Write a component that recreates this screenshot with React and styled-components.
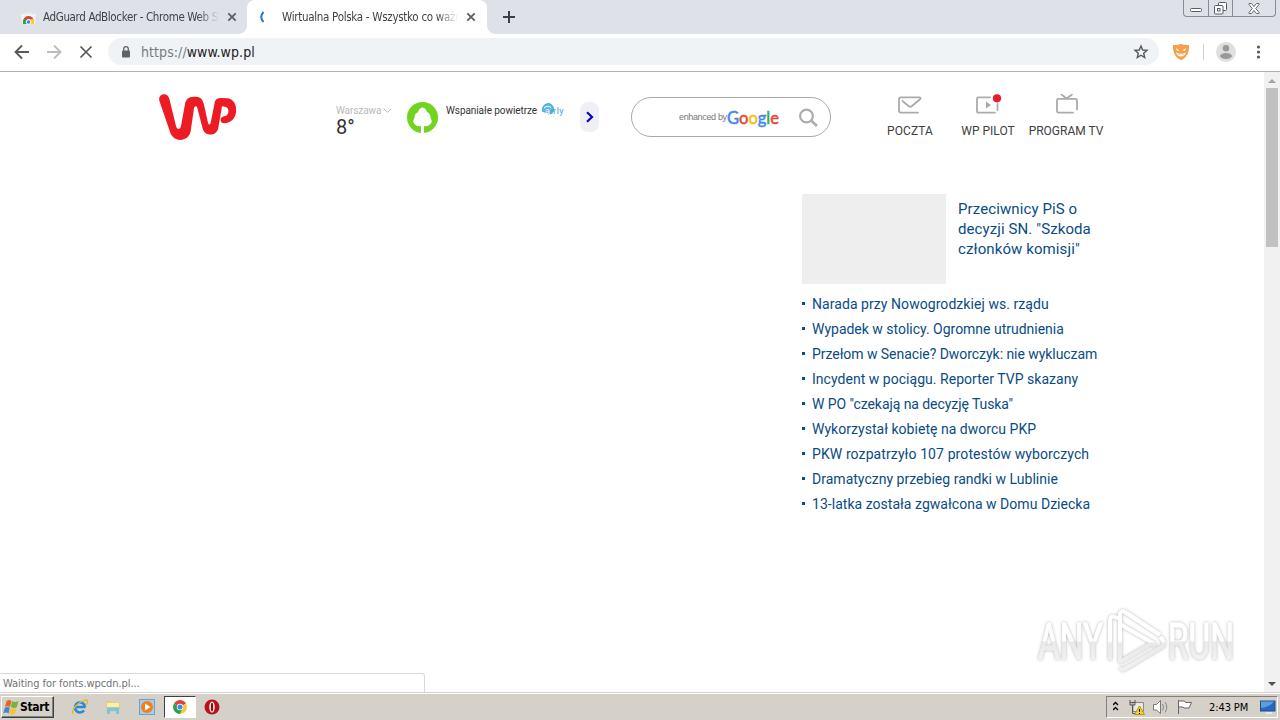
import React from "react";
import styled, { createGlobalStyle } from "styled-components";

const GlobalStyle = createGlobalStyle`
  * {
    box-sizing: border-box;
  }
  body {
    margin: 0;
    overflow: hidden;
    background: #fff;
  }
  svg {
    display: block;
    flex-shrink: 0;
  }
`;

const Screen = styled.div`
  position: relative;
  display: flex;
  flex-direction: column;
  width: 1280px;
  height: 720px;
  overflow: hidden;
  font-family: "DejaVu Sans Condensed", "DejaVu Sans", sans-serif;
  white-space: nowrap;
`;

const TabStrip = styled.div`
  display: flex;
  height: 34px;
  background: #dee1e8;
`;

const Tab = styled.div`
  position: relative;
  display: flex;
  align-items: center;
  width: ${props => (props.$active ? 240 : 247)}px;
  padding-left: ${props => (props.$active ? 8 : 21)}px;
  background: ${props => (props.$active ? "#fff" : "transparent")};
  border-radius: 8px 8px 0 0;

  &::before,
  &::after {
    content: ${props => (props.$active ? '""' : "none")};
    position: absolute;
    bottom: 0;
    width: 8px;
    height: 8px;
  }
  &::before {
    left: -8px;
    background: radial-gradient(circle at 0 0, transparent 7.5px, #fff 8px);
  }
  &::after {
    right: -8px;
    background: radial-gradient(circle at 100% 0, transparent 7.5px, #fff 8px);
  }
`;

const TabTitle = styled.div`
  width: 176px;
  margin: 0 8px 0 ${props => props.$gap}px;
  font-size: 11.5px;
  line-height: 20px;
  letter-spacing: ${props => props.$spacing}px;
  color: #3f4349;
  mask-image: linear-gradient(to right, #000 88%, transparent);
`;

const NewTab = styled.div`
  display: flex;
  align-items: center;
  padding-left: 15px;
`;

const WindowButtons = styled.div`
  display: flex;
  width: 93px;
  height: 17px;
  margin: 0 4px 0 auto;
  border: 1px solid #858b98;
  border-top: 0;
  border-radius: 0 0 4px 4px;
`;

const WindowButton = styled.div`
  display: flex;
  align-items: center;
  justify-content: center;
  width: ${props => props.$width}px;
  border-right: ${props => (props.$last ? 0 : 1)}px solid #858b98;
`;

const Toolbar = styled.div`
  display: flex;
  align-items: center;
  height: 38px;
  padding: 0 0 2px 14px;
  border-bottom: 1px solid #b2b2b2;
`;

const NavIcons = styled.div`
  display: flex;
  flex-shrink: 0;
  gap: 16px;
  width: 94px;
`;

const Omnibox = styled.div`
  display: flex;
  flex-shrink: 0;
  align-items: center;
  width: 1051px;
  height: 27px;
  padding: 0 10px 0 12px;
  border-radius: 14px;
  background: #f0f3f5;
`;

const Url = styled.div`
  margin: 0 auto 0 9px;
  font-size: 14px;
  line-height: 20px;
  letter-spacing: 0.07px;
  color: #1d2024;
`;

const Protocol = styled.span`
  color: #777b80;
`;

const Extensions = styled.div`
  display: flex;
  align-items: center;
  padding-left: 13px;
`;

const Divider = styled.div`
  width: 1px;
  height: 16px;
  margin: 0 12px 0 13px;
  background: #ccced1;
`;

const Viewport = styled.div`
  position: relative;
  display: flex;
  height: 620px;
`;

const Page = styled.div`
  width: 1264px;
  font-family: Roboto, sans-serif;
`;

const PageHeader = styled.div`
  display: flex;
  align-items: flex-start;
  height: 122px;
  padding: 22px 0 0 159px;
`;

const Weather = styled.div`
  width: 71px;
  margin-left: 100px;
  padding-top: 10px;
`;

const City = styled.div`
  display: flex;
  align-items: center;
  gap: 2px;
  font-size: 10px;
  line-height: 13px;
  letter-spacing: -0.1px;
  color: #b9b9b9;
`;

const Degrees = styled.div`
  font-size: 20px;
  line-height: 20px;
  color: #333;
`;

const Air = styled.div`
  display: flex;
  width: 173px;
  padding-top: 8px;
`;

const AirText = styled.div`
  margin: 2px 5px 0 8px;
  font-size: 10px;
  line-height: 14px;
  letter-spacing: -0.07px;
  color: #333;
`;

const NextButton = styled.div`
  display: flex;
  align-items: center;
  justify-content: center;
  width: 19px;
  height: 30px;
  margin-top: 8px;
  border-radius: 8px;
  background: #eef0f6;
`;

const Search = styled.div`
  display: flex;
  align-items: center;
  width: 200px;
  height: 40px;
  margin: 3px 0 0 32px;
  padding-left: 47px;
  border: 1px solid #aaa;
  border-radius: 20px;
`;

const Enhanced = styled.span`
  width: 48px;
  font-family: "Liberation Sans", Arial, sans-serif;
  font-size: 9px;
  letter-spacing: -0.35px;
  color: #777;
`;

const Services = styled.div`
  display: flex;
  margin-left: 40px;
`;

const Service = styled.div`
  display: flex;
  flex-direction: column;
  align-items: center;
  width: 78px;
  font-size: 12px;
  line-height: 16px;
  letter-spacing: ${props => props.$spacing || 0}px;
  color: #404040;
`;

const News = styled.div`
  width: 310px;
  margin-left: 802px;
`;

const Lead = styled.div`
  display: flex;
  gap: 12px;
  height: 97px;
`;

const Thumbnail = styled.div`
  width: 144px;
  height: 90px;
  background: #eee;
`;

const LeadTitle = styled.div`
  padding-top: 5px;
  font-size: 15px;
  line-height: 20px;
  letter-spacing: 0.1px;
  color: #0a4b84;
`;

const NewsItem = styled.div`
  display: flex;
  align-items: center;
  gap: 7px;
  height: 25px;
  font-size: 14px;
  letter-spacing: ${props => props.$spacing}px;
  color: #0a4b84;

  &::before {
    content: "";
    width: 3px;
    height: 3px;
    background: #0a4b84;
  }
`;

const Scrollbar = styled.div`
  display: flex;
  flex-direction: column;
  align-items: center;
  width: 16px;
  padding: 7px 0 6px;
  background: #f1f1f1;
`;

const Thumb = styled.div`
  width: 12px;
  height: 159px;
  margin: 5px 0 auto;
  background: #c1c1c1;
`;

const StatusBubble = styled.div`
  position: absolute;
  left: 0;
  bottom: 0;
  width: 425px;
  height: 19px;
  padding-left: 3px;
  border: 1px solid #d9d9d9;
  border-left: 0;
  border-bottom: 0;
  border-radius: 0 3px 0 0;
  background: #fff;
  font-size: 11px;
  line-height: 19px;
  letter-spacing: -0.08px;
  color: #737373;
`;

const Watermark = styled.div`
  position: absolute;
  left: 1030px;
  top: 532px;
`;

const Taskbar = styled.div`
  display: flex;
  align-items: center;
  height: 28px;
  padding: 1px 0 0 1px;
  border-top: 1px solid #d5d0c8;
  background: #d5d0c8;
  box-shadow: inset 0 1px #fff;
`;

const StartButton = styled.div`
  display: flex;
  align-items: center;
  gap: 1px;
  width: 53px;
  height: 22px;
  padding-left: 1px;
  border: 1px solid;
  border-color: #fff #404040 #404040 #fff;
  box-shadow: inset -1px -1px #808080;
  font-size: 12px;
  font-weight: bold;
  letter-spacing: -0.35px;
  color: #000;
`;

const TaskButton = styled.div`
  display: flex;
  align-items: center;
  justify-content: center;
  width: ${props => (props.$active ? 32 : 33.5)}px;
  height: 22px;
  border: ${props => (props.$active ? "1px solid" : "0")};
  border-color: #404040 #fff #fff #404040;
  background: ${props => (props.$active ? "#fff" : "transparent")};
`;

const QuickLaunch = styled.div`
  display: flex;
  padding-left: 9px;
`;

const Tray = styled.div`
  display: flex;
  align-items: center;
  width: 172px;
  height: 22px;
  margin: 0 2px 0 auto;
  padding-left: 6px;
  border: 1px solid;
  border-color: #808080 #fff #fff #808080;
`;

const Clock = styled.div`
  width: 50px;
  margin: 0 1px 0 16px;
  font-size: 11px;
  letter-spacing: -0.1px;
  color: #000;
`;

const Close = () => (
  <svg width="10" height="10" viewBox="0 0 10 10">
    <path d="M1.3 1.3l7.4 7.4M8.7 1.3L1.3 8.7" stroke="#5b5e63" strokeWidth="1.8" />
  </svg>
);

const WpLogo = () => (
  <svg width="77" height="46" viewBox="0 0 231 138">
    <path
      d="M1 20C-4 0 25-8 31 14L51 96C54 108 64 108 66 96L78 30C82 10 94 8 109 8C126 8 131 16 135 32L147 86C149 93 153 93 155 86L167 26C170 14 177 12 187 12L205 13C243 17 241 87 196 88C181 88 181 68 196 67C212 65 212 39 198 38L189 37L178 101C173 128 138 128 131 104L115 42C113 35 107 35 105 43L95 112C88 146 42 146 33 113Z"
      fill="#ed1c24"
    />
  </svg>
);

const Google = () => (
  <svg width="54" height="24" viewBox="0 0 54 24">
    <text
      x="0"
      y="18.5"
      fontFamily="Lato, sans-serif"
      fontSize="17.5"
      fontWeight="400"
      strokeWidth="0.5"
      textLength="52"
      lengthAdjust="spacingAndGlyphs"
    >
      <tspan fill="#4285f4" stroke="#4285f4">G</tspan>
      <tspan fill="#ea4335" stroke="#ea4335">o</tspan>
      <tspan fill="#fbbc05" stroke="#fbbc05">o</tspan>
      <tspan fill="#4285f4" stroke="#4285f4">g</tspan>
      <tspan fill="#34a853" stroke="#34a853">l</tspan>
      <tspan fill="#ea4335" stroke="#ea4335">e</tspan>
    </text>
  </svg>
);

const AnyRun = () => (
  <svg width="230" height="80" viewBox="0 0 230 80" overflow="visible">
    <defs>
      <linearGradient id="fade" x1="0" y1="0" x2="0" y2="76" gradientUnits="userSpaceOnUse">
        <stop offset="0.49" stopColor="#fff" />
        <stop offset="0.52" stopColor="#e9e9e9" />
        <stop offset="1" stopColor="#f4f4f4" />
      </linearGradient>
      <linearGradient id="fadeText" x1="0" y1="-35" x2="0" y2="0" gradientUnits="userSpaceOnUse">
        <stop offset="0.49" stopColor="#fff" />
        <stop offset="0.53" stopColor="#e9e9e9" />
        <stop offset="1" stopColor="#f2f2f2" />
      </linearGradient>
      <filter id="glow" x="-10%" y="-10%" width="120%" height="120%">
        <feDropShadow dx="0" dy="0" stdDeviation="1.8" floodColor="#777" floodOpacity="0.6" />
      </filter>
    </defs>
    <g filter="url(#glow)" fill="url(#fadeText)" fontFamily="Roboto, sans-serif" fontSize="49">
      <text transform="translate(8 54.500) scale(.68 1)" stroke="url(#fadeText)">ANY</text>
      <text transform="translate(138 54.500) scale(.68 1)" stroke="url(#fadeText)">RUN</text>
      <g fill="none" stroke="url(#fade)" strokeWidth="4" strokeLinejoin="round">
        <path d="M90 15V59M90 15L84 12.500Q80 12 80 17V56" />
        <path d="M90 15V10Q91 6 95 8L130 31M90 20L126 41M90 58L124 38M91 63Q91 67 96 64L133 42Q135 37 130 33" />
      </g>
    </g>
  </svg>
);

const ServiceIcon = ({ type }) => (
  <svg width="30" height="29" viewBox="0 0 30 29" fill="none" stroke="#ababab" strokeWidth="1.8" strokeLinecap="round">
    {type === "mail" && (
      <path d="M23 18.700H6Q4 18.700 4 16.700V5Q4 3.300 6 3.300H24.500Q26.500 3.600 25 5.300L17 12Q15.300 13.500 13.500 12L7.500 7" />
    )}
    {type === "pilot" && (
      <g>
        <path d="M17 3.300H5.500Q4 3.300 4 5V17Q4 18.700 5.500 18.700H22M24.500 10V16" />
        <path d="M13 7.500v7l5-3.500z" fill="#a8a8a8" stroke="none" />
        <circle cx="24" cy="4.300" r="4.100" fill="#ed1c24" stroke="none" />
      </g>
    )}
    {type === "tv" && (
      <path d="M22 18.700H7.500Q6 18.700 6 17V6.500Q6 4.800 7.500 4.800H24.500Q26 4.800 26 6.500V15.500M10.500 .5L15.500 4.500L21 .5" />
    )}
  </svg>
);

const Chrome = () => (
  <svg width="14" height="14" viewBox="0 0 14 14">
    <path d="M7 7L1 3.500A7 7 0 0 1 13 3.500z" fill="#e34133" />
    <path d="M7 7L1 3.500A7 7 0 0 0 7 14L10 8.500z" fill="#2ba24c" />
    <path d="M7 7L13 3.500A7 7 0 0 1 7 14L10 8.500z" fill="#fcc934" />
    <circle cx="7" cy="7" r="3.200" fill="#fff" />
    <circle cx="7" cy="7" r="2.500" fill="#4285f4" />
  </svg>
);

const WindowsFlag = () => (
  <svg width="16" height="16" viewBox="0 0 16 16">
    <path d="M3.500 2Q6 0 8.500 2L7 8Q4.500 6.500 2 8z" fill="#e6642c" />
    <path d="M9.300 2Q12 4 15.500 2L13.800 8Q11 10 7.900 8z" fill="#73b537" />
    <path d="M1.700 9Q4.500 7 6.800 9L5.500 14.500Q3 12.500.3 14.500z" fill="#3b87d3" />
    <path d="M7.600 9Q10.500 11 13.500 9L12 14.500Q9.500 16.500 6.300 14.500z" fill="#f6c52e" />
  </svg>
);

const news = [
  { title: "Narada przy Nowogrodzkiej ws. rządu", spacing: 0.06 },
  { title: "Wypadek w stolicy. Ogromne utrudnienia", spacing: -0.01 },
  { title: "Przełom w Senacie? Dworczyk: nie wykluczam", spacing: -0.05 },
  { title: "Incydent w pociągu. Reporter TVP skazany", spacing: 0.03 },
  { title: "W PO \"czekają na decyzję Tuska\"", spacing: -0.07 },
  { title: "Wykorzystał kobietę na dworcu PKP", spacing: 0.03 },
  { title: "PKW rozpatrzyło 107 protestów wyborczych", spacing: 0.1 },
  { title: "Dramatyczny przebieg randki w Lublinie", spacing: 0.02 },
  { title: "13-latka została zgwałcona w Domu Dziecka", spacing: 0.03 }
];

const BrowserTabs = () => (
  <TabStrip>
    <Tab>
      <svg width="15" height="15" viewBox="0 0 15 15">
        <path d="M0 4h15l-1 10H1z" fill="#f3f3f3" />
        <path d="M4 2h7v2H4z" fill="#e9e9e9" />
        <path d="M2 12a5.500 5.500 0 0 1 11-1L7.500 9z" fill="#dc4437" />
        <path d="M2 14V11L4 8l4 6z" fill="#2ba24c" />
        <path d="M8 14l2-5h3v5z" fill="#fcc934" />
        <circle cx="7.500" cy="12" r="2.300" fill="#4285f4" stroke="#fff" />
      </svg>
      <TabTitle $gap={7} $spacing={-0.36}>AdGuard AdBlocker - Chrome Web St</TabTitle>
      <Close />
    </Tab>
    <Tab $active>
      <svg width="16" height="16" viewBox="0 0 16 16">
        <path d="M8.500 3Q4 8 8.500 13" fill="none" stroke="#2f73dc" strokeWidth="2" />
      </svg>
      <TabTitle $gap={11} $spacing={-0.3}>Wirtualna Polska - Wszystko co ważn</TabTitle>
      <Close />
    </Tab>
    <NewTab>
      <svg width="14" height="14" viewBox="0 0 14 14">
        <path d="M7 1v12M1 7h12" stroke="#3c4043" strokeWidth="2" />
      </svg>
    </NewTab>
    <WindowButtons>
      <WindowButton $width={25}>
        <svg width="12" height="12" viewBox="0 0 12 12">
          <rect x=".5" y="6.500" width="11" height="3" rx="1" fill="#fff" stroke="#555b68" />
        </svg>
      </WindowButton>
      <WindowButton $width={25}>
        <svg width="13" height="13" viewBox="0 0 13 13" fill="#fff" stroke="#555b68">
          <rect x="4.500" y=".5" width="8" height="8" rx="1" />
          <rect x=".5" y="3.500" width="8.500" height="8.500" rx="1" />
          <rect x="3.500" y="6.500" width="2.500" height="2.500" />
        </svg>
      </WindowButton>
      <WindowButton $width={42} $last>
        <svg width="12" height="11" viewBox="0 0 12 11">
          <path
            d="M1 .5h2.500L6 3.500 8.500.5H11v1L7.800 5.500 11 9.500v1H8.500L6 7.500 3.500 10.500H1v-1L4.200 5.500 1 1.500z"
            fill="#fff"
            stroke="#555b68"
            strokeWidth=".9"
          />
        </svg>
      </WindowButton>
    </WindowButtons>
  </TabStrip>
);

const BrowserToolbar = () => (
  <Toolbar>
    <NavIcons>
      {["#55585c", "#bcbdbf"].map((color, i) => (
        <svg key={color} width="16" height="16" viewBox="0 0 16 16" transform={i ? "scale(-1 1)" : undefined}>
          <path d="M15 8H2M8 1.500L1.500 8L8 14.500" fill="none" stroke={color} strokeWidth="1.800" />
        </svg>
      ))}
      <svg width="16" height="16" viewBox="0 0 16 16">
        <path d="M2.500 2.500l11 11M13.500 2.500l-11 11" stroke="#55585c" strokeWidth="1.700" />
      </svg>
    </NavIcons>
    <Omnibox>
      <svg width="12" height="14" viewBox="0 0 12 14">
        <rect x="2" y="5.500" width="8" height="7" rx="1" fill="#5f6368" />
        <path d="M3.700 6V4a2.300 2.300 0 0 1 4.600 0v2" fill="none" stroke="#5f6368" strokeWidth="1.300" />
      </svg>
      <Url><Protocol>https://</Protocol>www.wp.pl</Url>
      <svg width="16" height="16" viewBox="0 0 16 16">
        <path
          d="M8 2l1.700 4 4.300.4-3.300 2.800 1 4.300L8 11.200l-3.700 2.300 1-4.300L2 6.400 6.300 6z"
          fill="none"
          stroke="#55585c"
          strokeWidth="1.400"
        />
      </svg>
    </Omnibox>
    <Extensions>
      <svg width="18" height="18" viewBox="0 0 18 18">
        <path d="M9 .8Q12 2.500 17 2C17.500 9 15 14.500 9 17.200C3 14.500.5 9 1 2Q6 2.500 9 .8z" fill="#f6a04d" />
        <path d="M4 5l3.500 2.500L5 8zM14 5l-3.500 2.500L13 8z" fill="#fff" />
        <path d="M4 9.500Q9 12 14 9.500Q12.500 13.500 9 13.500Q5.500 13.500 4 9.500z" fill="#fff" />
        <path d="M7 10.700v1.300M11 10.700v1.300" stroke="#f6a04d" />
      </svg>
      <Divider />
      <svg width="20" height="20" viewBox="0 0 20 20">
        <circle cx="10" cy="10" r="10" fill="#dfdfdf" />
        <circle cx="10" cy="6.300" r="3.200" fill="#989898" />
        <ellipse cx="10" cy="14" rx="6" ry="2.900" fill="#989898" />
      </svg>
      <svg width="40" height="16" viewBox="0 0 40 16" fill="#55585c">
        <circle cx="22.500" cy="3" r="1.600" />
        <circle cx="22.500" cy="8" r="1.600" />
        <circle cx="22.500" cy="13" r="1.600" />
      </svg>
    </Extensions>
  </Toolbar>
);

const WpHeader = () => (
  <PageHeader>
    <WpLogo />
    <Weather>
      <City>
        Warszawa
        <svg width="9" height="6" viewBox="0 0 9 6">
          <path d="M1 1l3.500 3.300L8 1" fill="none" stroke="#b9b9b9" />
        </svg>
      </City>
      <Degrees>8°</Degrees>
    </Weather>
    <Air>
      <svg width="31" height="31" viewBox="0 0 31 31">
        <circle cx="15.500" cy="15.500" r="15.500" fill="#71d41e" />
        <path
          d="M15.500 5.500Q19 6 20 10Q24 12 23.500 16Q26 19.500 23.500 22Q20.500 25 17 24V31H14V24Q10 25 7.500 22Q5 19.500 7.500 16Q7 12 11 10Q12 6 15.500 5.500z"
          fill="#fff"
        />
      </svg>
      <AirText>Wspaniałe powietrze</AirText>
      <svg width="24" height="16" viewBox="0 0 24 16">
        <path d="M1 10Q-1 3 6 1.500Q12 2 11.500 9Q10 12 6 12" fill="#5fb6e2" stroke="#3ba4d8" />
        <path d="M2 6Q6 2.500 9.500 6" fill="none" stroke="#fff" />
        <text x="3" y="12" fontSize="9" letterSpacing=".5" fontFamily="Roboto" fill="#3ba4d8">
          <tspan fill="#fff">a</tspan>irly
        </text>
      </svg>
    </Air>
    <NextButton>
      <svg width="9" height="12" viewBox="0 0 9 12">
        <path d="M2 1.300L7 6L2 10.700" fill="none" stroke="#0a00c8" strokeWidth="2.200" />
      </svg>
    </NextButton>
    <Search>
      <Enhanced>enhanced by</Enhanced>
      <Google />
      <svg width="40" height="24" viewBox="0 0 40 24" fill="none" stroke="#adadad">
        <circle cx="25.500" cy="11" r="6.400" strokeWidth="2.200" />
        <path d="M30 15.500l6 5.500" strokeWidth="2.800" />
      </svg>
    </Search>
    <Services>
      <Service $spacing={0.1}><ServiceIcon type="mail" />POCZTA</Service>
      <Service><ServiceIcon type="pilot" />WP PILOT</Service>
      <Service><ServiceIcon type="tv" />PROGRAM TV</Service>
    </Services>
  </PageHeader>
);

const WindowsTaskbar = () => (
  <Taskbar>
    <StartButton><WindowsFlag />Start</StartButton>
    <QuickLaunch>
      <TaskButton>
        <svg width="16" height="16" viewBox="0 0 16 16" fill="none">
          <path d="M13.500 8H4.500M13 8A5 5 0 1 0 12 11.500" stroke="#268bd8" strokeWidth="2.600" />
          <path d="M1 15Q-1 11 6 5Q14-1 15.500 2Q16 3 14 6" stroke="#e5b62d" strokeWidth="1.300" />
        </svg>
      </TaskButton>
      <TaskButton>
        <svg width="16" height="16" viewBox="0 0 16 16">
          <path d="M1 2h5l1 1.500h8V13H1z" fill="#edcd67" />
          <path d="M2 4h12v4H2z" fill="#fbefb0" />
          <path d="M2 15V8.500h12V15h-3v-3H5v3z" fill="#79c4e8" />
        </svg>
      </TaskButton>
      <TaskButton>
        <svg width="16" height="16" viewBox="0 0 16 16">
          <rect x=".5" y=".5" width="15" height="15" fill="#a8cdec" stroke="#6f9fcb" />
          <circle cx="8" cy="8" r="6" fill="#f28018" />
          <path d="M6 4.500v7L11.500 8z" fill="#fff" />
        </svg>
      </TaskButton>
      <TaskButton $active><Chrome /></TaskButton>
      <TaskButton>
        <svg width="16" height="16" viewBox="0 0 16 16">
          <circle cx="8" cy="8" r="7.500" fill="#b5121b" />
          <ellipse cx="8" cy="8" rx="2.700" ry="5.500" fill="#fff" />
          <ellipse cx="8" cy="8" rx="1.200" ry="4.500" fill="#8d0b12" />
        </svg>
      </TaskButton>
    </QuickLaunch>
    <Tray>
      <svg width="80" height="18" viewBox="0 0 80 18" fill="none" stroke="#444">
        <path d="M0 7l2.500-2.500L5 7M0 12l2.500-2.500L5 12" stroke="#000" strokeWidth="1.400" />
        <path d="M20 4.500h10.500v9H20z" fill="#e8e8e8" stroke="#888" />
        <path d="M17 2v5h5V2M19.500 7v8.500H24M17 4.500h5" stroke="#555" />
        <path d="M26.500 8L31.500 16.500H21.500z" fill="#f6d32c" stroke="#b79800" />
        <path d="M26.500 11v3M26.500 15v1" stroke="#000" />
        <path d="M40.500 6.500h3L47.500 2.500v13L43.500 12h-3z" fill="#fff" stroke="#777" />
        <path d="M49.500 6Q51.500 9 49.500 12.500M52 4Q55.500 9 52 14.500" stroke="#888" />
        <path d="M65.500 2v14M65.500 3h6l1 1.500h6L76 10h-5l-1-1h-4.500" fill="#fff" stroke="#666" />
      </svg>
      <Clock>2:43 PM</Clock>
      <svg width="16" height="14" viewBox="0 0 16 14">
        <rect x=".5" y="1" width="14.500" height="10" fill="#2767bc" stroke="#225083" />
        <path d="M1 1.500h13Q10 7 1 8z" fill="#5b9de0" />
        <path d="M6 13h6" stroke="#e9f3fa" strokeWidth="1.500" />
      </svg>
    </Tray>
  </Taskbar>
);

const App = () => (
  <Screen>
    <GlobalStyle />
    <BrowserTabs />
    <BrowserToolbar />
    <Viewport>
      <Page>
        <WpHeader />
        <News>
          <Lead>
            <Thumbnail />
            <LeadTitle>
              Przeciwnicy PiS o<br />
              decyzji SN. "Szkoda<br />
              członków komisji"
            </LeadTitle>
          </Lead>
          {news.map(({ title, spacing }) => (
            <NewsItem key={title} $spacing={spacing}>{title}</NewsItem>
          ))}
        </News>
      </Page>
      <Scrollbar>
        <svg width="8" height="4" viewBox="0 0 8 4"><path d="M0 4l4-4 4 4z" fill="#a3a3a3" /></svg>
        <Thumb />
        <svg width="8" height="4" viewBox="0 0 8 4"><path d="M0 0l4 4 4-4z" fill="#505050" /></svg>
      </Scrollbar>
      <StatusBubble>Waiting for fonts.wpcdn.pl...</StatusBubble>
      <Watermark><AnyRun /></Watermark>
    </Viewport>
    <WindowsTaskbar />
  </Screen>
);

export default App;
